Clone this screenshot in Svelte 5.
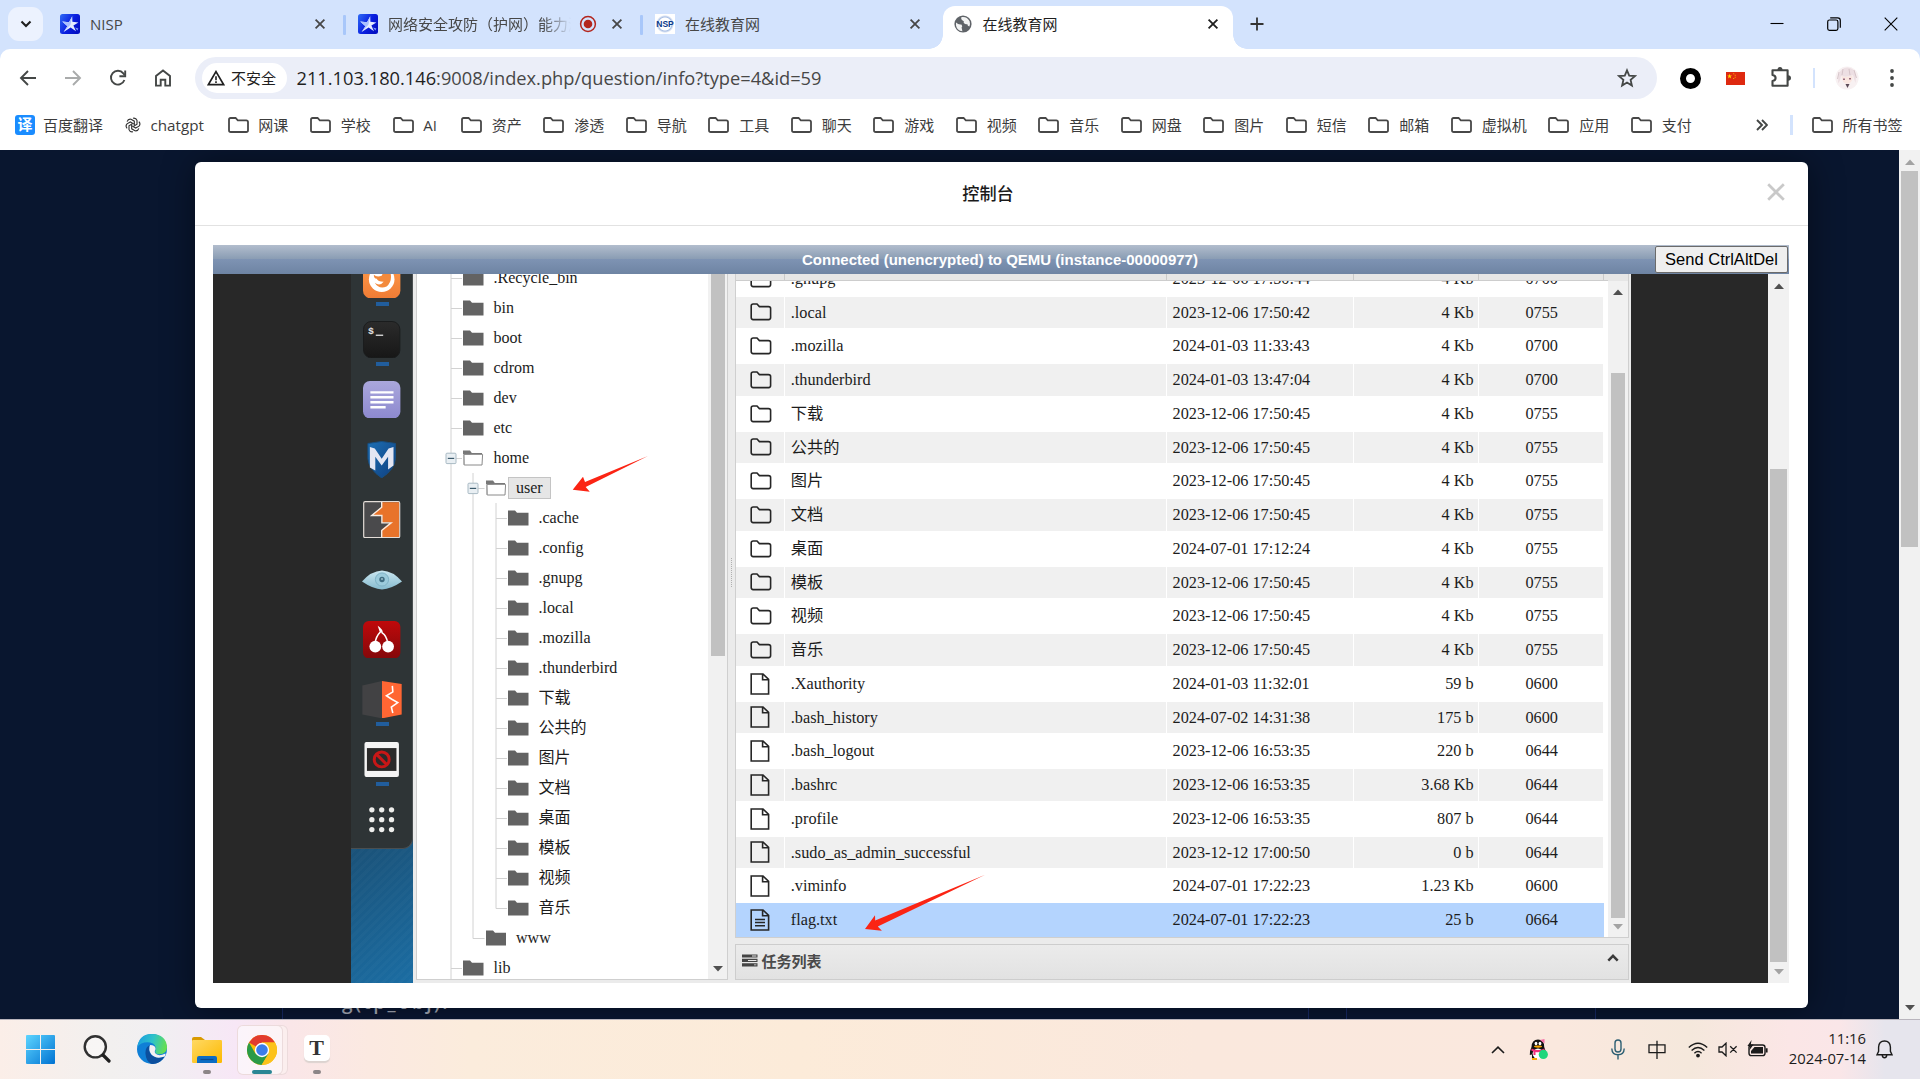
<script>
  const bookmarks = ['网课', '学校', 'AI', '资产', '渗透', '导航', '工具', '聊天', '游戏', '视频', '音乐', '网盘', '图片', '短信', '邮箱', '虚拟机', '应用', '支付'];

  // guides: v = vertical line, t = tee, m = tee with a minus box, l = corner
  const tree = [
    ['t', '.Recycle_bin'],
    ['t', 'bin'],
    ['t', 'boot'],
    ['t', 'cdrom'],
    ['t', 'dev'],
    ['t', 'etc'],
    ['m', 'home', 'open'],
    ['vm', 'user', 'open', true],
    ['vvt', '.cache'],
    ['vvt', '.config'],
    ['vvt', '.gnupg'],
    ['vvt', '.local'],
    ['vvt', '.mozilla'],
    ['vvt', '.thunderbird'],
    ['vvt', '下载'],
    ['vvt', '公共的'],
    ['vvt', '图片'],
    ['vvt', '文档'],
    ['vvt', '桌面'],
    ['vvt', '模板'],
    ['vvt', '视频'],
    ['vvl', '音乐'],
    ['vl', 'www'],
    ['t', 'lib'],
  ];

  const files = [
    ['dir', '.gnupg', '2023-12-06 17:50:44', '4 Kb', '0700'],
    ['dir', '.local', '2023-12-06 17:50:42', '4 Kb', '0755'],
    ['dir', '.mozilla', '2024-01-03 11:33:43', '4 Kb', '0700'],
    ['dir', '.thunderbird', '2024-01-03 13:47:04', '4 Kb', '0700'],
    ['dir', '下载', '2023-12-06 17:50:45', '4 Kb', '0755'],
    ['dir', '公共的', '2023-12-06 17:50:45', '4 Kb', '0755'],
    ['dir', '图片', '2023-12-06 17:50:45', '4 Kb', '0755'],
    ['dir', '文档', '2023-12-06 17:50:45', '4 Kb', '0755'],
    ['dir', '桌面', '2024-07-01 17:12:24', '4 Kb', '0755'],
    ['dir', '模板', '2023-12-06 17:50:45', '4 Kb', '0755'],
    ['dir', '视频', '2023-12-06 17:50:45', '4 Kb', '0755'],
    ['dir', '音乐', '2023-12-06 17:50:45', '4 Kb', '0755'],
    ['file', '.Xauthority', '2024-01-03 11:32:01', '59 b', '0600'],
    ['file', '.bash_history', '2024-07-02 14:31:38', '175 b', '0600'],
    ['file', '.bash_logout', '2023-12-06 16:53:35', '220 b', '0644'],
    ['file', '.bashrc', '2023-12-06 16:53:35', '3.68 Kb', '0644'],
    ['file', '.profile', '2023-12-06 16:53:35', '807 b', '0644'],
    ['file', '.sudo_as_admin_successful', '2023-12-12 17:00:50', '0 b', '0644'],
    ['file', '.viminfo', '2024-07-01 17:22:23', '1.23 Kb', '0600'],
    ['text', 'flag.txt', '2024-07-01 17:22:23', '25 b', '0664'],
  ];
</script>

{#snippet star()}
  <svg class="fav" viewBox="0 0 20 20">
    <defs><linearGradient id="sg" x1="0" y1="0" x2="1" y2="0.6"><stop offset="0" stop-color="#2f6bf5" /><stop offset="0.6" stop-color="#0a1fe0" /><stop offset="1" stop-color="#0410c4" /></linearGradient></defs>
    <rect width="20" height="20" rx="2.5" fill="url(#sg)" />
    <path d="M12.2 2.2 L12.4 7.8 L18.4 8.4 L13.4 11.4 L16 17.2 L10.6 13.6 L3.6 18 L7.4 12.2 L2.2 7.4 L9 8.2 Z" fill="#e6edff" />
    <path d="M12.2 2.2 L10.4 10.8 L3.6 18 L7.4 12.2 L2.2 7.4 L9 8.2 Z" fill="#a9c0ff" />
    <path d="M15 13.4 L18.4 14.6 L17.4 16.4 Z" fill="#7f9aff" />
  </svg>
{/snippet}

{#snippet cross()}
  <svg class="cross" viewBox="0 0 12 12"><path d="M1.6 1.6 L10.4 10.4 M10.4 1.6 L1.6 10.4" stroke="currentColor" stroke-width="1.8" fill="none" /></svg>
{/snippet}

{#snippet folder()}
  <svg class="bfolder" viewBox="0 0 21 16"><path d="M1 2.6 Q1 1 2.6 1 H7.6 L9.8 3.3 H18.2 Q20 3.3 20 5 V13.2 Q20 15 18.2 15 H2.8 Q1 15 1 13.2 Z" fill="none" stroke="#474747" stroke-width="1.8" /></svg>
{/snippet}

{#snippet arrow(dir, tone)}
  <svg class="sarrow" viewBox="0 0 10 6"><path d={dir === 'up' ? 'M0 6 L5 0.5 L10 6 Z' : 'M0 0 L5 5.5 L10 0 Z'} fill={tone} /></svg>
{/snippet}

{#snippet guide(kind)}
  <svg class="guide" viewBox="0 0 22.5 30">
    <path d={kind === 'v' ? 'M11 0 V30' : kind === 'l' ? 'M11 0 V15.5 H22.5' : 'M11 0 V30 M11 15.5 H22.5'} fill="none" stroke="#d2d2d2" stroke-width="1" />
    {#if kind === 'm'}
      <rect x="6" y="10.2" width="10" height="10.4" rx="1" fill="#e9eff3" stroke="#a9bac4" stroke-width="1" />
      <path d="M7.8 15.4 H14.2" stroke="#3c5a6c" stroke-width="1.2" />
    {/if}
  </svg>
{/snippet}

<div class="screen">
  <header class="tabs">
    <div class="search-tabs"><svg width="12" height="8" viewBox="0 0 12 8"><path d="M1.5 1.5 L6 6 L10.5 1.5" fill="none" stroke="#1f1f1f" stroke-width="2.1" /></svg></div>
    <div class="tab t1">{@render star()}<span class="label">NISP</span>{@render cross()}</div>
    <i class="tsep"></i>
    <div class="tab t2">
      {@render star()}<span class="label fade">网络安全攻防（护网）能力测</span>
      <svg class="rec" viewBox="0 0 18 18"><circle cx="9" cy="9" r="7.4" fill="none" stroke="#b3261e" stroke-width="1.5" /><circle cx="9" cy="9" r="4.3" fill="#b3261e" /></svg>
      {@render cross()}
    </div>
    <i class="tsep"></i>
    <div class="tab t3">
      <span class="nsp"><b>NSP</b></span>
      <span class="label">在线教育网</span>{@render cross()}
    </div>
    <div class="tab active">
      <svg class="globe" viewBox="0 0 18 18"><circle cx="9" cy="9" r="8.6" fill="#5f6368" /><path d="M2 7.5 Q4.5 10 7.4 9.4 Q9 11.2 7.6 12.6 L8.4 16.2 Q3 15.5 2 10.4 Z M7.5 2.1 Q13 1.2 15.6 6.2 Q16.6 9.4 15.4 11.6 Q13.5 11.4 13.2 9 Q10.8 9.8 9.6 7.6 Q10.6 6 8.6 5.4 Q6.6 4.6 7.5 2.1 Z" fill="#fff" opacity="0.92" /></svg>
      <span class="label">在线教育网</span>{@render cross()}
    </div>
    <svg class="plus" viewBox="0 0 14 14"><path d="M7 0.5 V13.5 M0.5 7 H13.5" stroke="#333" stroke-width="1.8" /></svg>
    <div class="win">
      <svg viewBox="0 0 14 14"><path d="M0.5 6.5 H13.5" stroke="#000" stroke-width="1.1" /></svg>
      <svg viewBox="0 0 14 14"><rect x="0.7" y="3" width="10.2" height="10.4" rx="1.8" fill="none" stroke="#000" stroke-width="1.2" /><path d="M3.2 0.8 H10.6 Q13.3 0.8 13.3 3.4 V10.8" fill="none" stroke="#000" stroke-width="1.2" /></svg>
      <svg viewBox="0 0 14 14"><path d="M0.7 0.7 L13.3 13.3 M13.3 0.7 L0.7 13.3" stroke="#000" stroke-width="1.1" /></svg>
    </div>
  </header>

  <section class="chrome">
    <div class="toolbar">
      <svg class="nav" viewBox="0 0 18 18"><path d="M17 9 H2 M9 2 L2 9 L9 16" fill="none" stroke="#444746" stroke-width="1.9" /></svg>
      <svg class="nav" viewBox="0 0 18 18"><path d="M1 9 H16 M9 2 L16 9 L9 16" fill="none" stroke="#a9abab" stroke-width="1.9" /></svg>
      <svg class="nav" viewBox="0 0 18 18"><path d="M15.4 11 A6.9 6.9 0 1 1 14.3 4.4 L15.6 6" fill="none" stroke="#444746" stroke-width="1.9" /><path d="M16.2 1.4 V7.2 H10.4" fill="none" stroke="#444746" stroke-width="1.9" /></svg>
      <svg class="nav" viewBox="0 0 18 18"><path d="M2 16.6 V7 L9 1.5 L16 7 V16.6 H11.3 V10.8 H6.7 V16.6 Z" fill="none" stroke="#444746" stroke-width="1.9" /></svg>
      <div class="omni">
        <div class="chip">
          <svg width="18" height="16" viewBox="0 0 18 16"><path d="M9 1.6 L16.6 14.6 H1.4 Z" fill="none" stroke="#1f1f1f" stroke-width="1.7" /><path d="M9 6.2 V10.2 M9 11.3 V13" stroke="#1f1f1f" stroke-width="1.6" /></svg>
          <span>不安全</span>
        </div>
        <span class="url"><b>211.103.180.146</b>:9008/index.php/question/info?type=4&amp;id=59</span>
        <svg class="fstar" viewBox="0 0 20 20"><path d="M10 2.3 L12.2 7.6 L18 8.1 L13.6 11.9 L14.9 17.5 L10 14.5 L5.1 17.5 L6.4 11.9 L2 8.1 L7.8 7.6 Z" fill="none" stroke="#444746" stroke-width="1.8" /></svg>
      </div>
      <i class="ring"></i>
      <svg class="flag" viewBox="0 0 19 13"><rect width="19" height="13" fill="#de2910" /><path d="M3.6 1.8 L4.2 3.5 H6 L4.6 4.6 L5.1 6.4 L3.6 5.3 L2.1 6.4 L2.6 4.6 L1.2 3.5 H3 Z" fill="#ffde00" /><path d="M7.2 1.2h1v1h-1z M8.7 2.8h1v1h-1z M8.7 4.7h1v1h-1z M7.2 6.1h1v1h-1z" fill="#ffb000" /></svg>
      <svg class="puzzle" viewBox="0 0 22 22"><path d="M2.5 4.3 H17.6 V19.8 H2.5 V15 Q5.6 14.6 5.6 12 Q5.6 9.4 2.5 9 Z" fill="none" stroke="#444746" stroke-width="2.1" stroke-linejoin="round" /><path d="M7.4 4 Q7.6 0.9 10 0.9 Q12.4 0.9 12.6 4 Z M18 9.2 Q21 9.4 21 12 Q21 14.6 18 14.8 Z" fill="#444746" /></svg>
      <i class="tbsep"></i>
      <svg class="avatar" viewBox="0 0 24 24"><circle cx="12" cy="12" r="11.6" fill="#f8f1f2" /><path d="M3.5 9 Q6 1.5 12.5 1.5 Q20 2 21 9.5 L20.5 17 Q19 13 18 9 Q12 12 6 10 Q5 16 3 17 Z" fill="#eddfe3" /><path d="M6.5 10 Q12 12 17.5 9.5 Q18 17 12.5 18 Q7 17.5 6.5 10 Z" fill="#fae6e0" /><path d="M8 12.5 h2 v1.6 h-2 z M14 12 h2 v1.6 h-2 z" fill="#9a6f80" /><path d="M10.5 18 L12.5 22 L14.5 18 Z" fill="#5a4a56" /><path d="M4 6 L2.5 13 M19 4 L21.5 12 M8 3 L7 9 M14 3 L15 9" stroke="#cfbcc2" stroke-width="0.8" /></svg>
      <svg class="dots" viewBox="0 0 4 18"><circle cx="2" cy="2" r="1.9" fill="#444746" /><circle cx="2" cy="9" r="1.9" fill="#444746" /><circle cx="2" cy="16" r="1.9" fill="#444746" /></svg>
    </div>
    <nav class="marks">
      <span class="yi">译</span><span class="bm baidu">百度翻译</span>
      <svg class="gpt" viewBox="0 0 16 16"><g fill="none" stroke="#333" stroke-width="1.15">{#each [0, 60, 120, 180, 240, 300] as a}<path d="M8 1.2 Q11 0.6 12 3.4 L12 7.2 L8.6 9.2" transform={`rotate(${a} 8 8)`} />{/each}</g></svg>
      <span class="bm gptlabel">chatgpt</span>
      {#each bookmarks as b}
        <span class="mark">{@render folder()}<span class="bm">{b}</span></span>
      {/each}
      <svg class="more" viewBox="0 0 12 12"><path d="M1 1 L6 6 L1 11 M6 1 L11 6 L6 11" fill="none" stroke="#444746" stroke-width="1.9" /></svg>
      <i class="bmsep"></i>
      <span class="mark all">{@render folder()}<span class="bm">所有书签</span></span>
    </nav>
  </section>

  <main class="page">
    <div class="stage">
      <div class="modal">
        <div class="mhead">
          <span class="mtitle">控制台</span>
          <svg class="mclose" viewBox="0 0 18 18"><path d="M1.2 1.2 L16.8 16.8 M16.8 1.2 L1.2 16.8" stroke="#c9c9c9" stroke-width="2.7" /></svg>
        </div>
        <div class="console">
          <div class="cbar"><span>Connected (unencrypted) to QEMU (instance-00000977)</span><button>Send CtrlAltDel</button></div>
          <div class="vm">
            <div class="dark left"></div>
            <div class="deskcol">
              <div class="dock">
                <div class="slot"><svg viewBox="0 0 38 38"><defs><linearGradient id="og" x1="0" y1="0" x2="0" y2="1"><stop offset="0" stop-color="#ff9d4d" /><stop offset="1" stop-color="#f07c35" /></linearGradient></defs><rect width="38" height="38" rx="8" fill="url(#og)" /><circle cx="19" cy="18.5" r="13" fill="#fff" /><path d="M11 14 Q14 17 19 15 Q21 10 27 9 Q31 20 24 26 Q16 29 12 22 Q17 26 21 21 Q15 21 14 18 Q11 18 11 14 Z" fill="#f38a3c" /></svg><i></i></div>
                <div class="slot"><svg viewBox="0 0 38 38"><defs><linearGradient id="tg" x1="0" y1="0" x2="0" y2="1"><stop offset="0" stop-color="#2b2b2b" /><stop offset="1" stop-color="#171717" /></linearGradient></defs><rect x="0.5" y="0.5" width="37" height="37" rx="8" fill="url(#tg)" stroke="#1b1d1e" /><text x="5" y="13" class="term">$</text><path d="M13 14.5 H20.5" stroke="#d8d8d8" stroke-width="1.4" /></svg><i></i></div>
                <div class="slot"><svg viewBox="0 0 38 38"><defs><linearGradient id="pg" x1="0" y1="0" x2="0" y2="1"><stop offset="0" stop-color="#aaa7dc" /><stop offset="1" stop-color="#8d89cf" /></linearGradient></defs><rect width="38" height="38" rx="7" fill="url(#pg)" /><path d="M7.5 11.5 H31 M7.5 16.5 H31 M7.5 21.6 H31 M7.5 26.7 H23" stroke="#fff" stroke-width="2.4" /></svg></div>
                <div class="slot"><svg viewBox="0 0 38 38"><defs><linearGradient id="mg" x1="0" y1="0" x2="1" y2="1"><stop offset="0" stop-color="#1d6fb4" /><stop offset="1" stop-color="#0f3f80" /></linearGradient></defs><path d="M5 2.5 Q12 1.5 19 0.5 Q26 1.5 33 2.5 L33 18 Q32 29 19 37.5 Q6 29 5 18 Z" fill="url(#mg)" stroke="#174f82" /><path d="M7 27 L7 6 L12 7.5 L19 18 L26 7.5 L31 6 V25 L25.5 29 V16 L19 25 L12.5 16 V30 Z" fill="#e4e6f3" /></svg></div>
                <div class="slot"><svg viewBox="0 0 38 38"><rect x="0.7" y="0.7" width="36.6" height="36.6" rx="1.5" fill="#4a4a4c" stroke="#e4ddd8" stroke-width="1.2" /><path d="M19 1.3 H36.7 V36.7 H19 V29 L28 21.5 L19.4 22 V14.4 L8.8 14.6 L19 6 Z" fill="#e8732a" /><path d="M19 1 V6.4 L8.8 14.8 H19.2 V22.2 H28.6 L19 30 V37" fill="none" stroke="#f5ece4" stroke-width="1.4" /></svg></div>
                <div class="slot"><svg class="eye" viewBox="0 0 40 20"><defs><linearGradient id="eg" x1="0" y1="0" x2="0" y2="1"><stop offset="0" stop-color="#cbe7f1" /><stop offset="1" stop-color="#86bbcf" /></linearGradient></defs><path d="M0 11.5 Q9 1 20 0.5 Q31 1 40 11.5 Q29 19 20 19.5 Q11 19 0 11.5 Z" fill="url(#eg)" /><circle cx="20" cy="9.5" r="6.6" fill="#9ccbdc" stroke="#7fb3c7" /><circle cx="20" cy="9.5" r="2.7" fill="#3f6d82" /><circle cx="20" cy="9" r="1" fill="#9bbdca" /></svg></div>
                <div class="slot"><svg viewBox="0 0 38 38"><defs><linearGradient id="rg" x1="0" y1="0" x2="0" y2="1"><stop offset="0" stop-color="#c0090b" /><stop offset="1" stop-color="#84080a" /></linearGradient></defs><rect width="38" height="38" rx="6" fill="url(#rg)" /><path d="M12.5 22 Q13 16 17.8 11 L16.5 7 Q19 9 19.5 12 Q24 15 25 22" fill="none" stroke="#fff" stroke-width="1.6" /><circle cx="12.5" cy="26" r="6" fill="#fff" /><circle cx="25.5" cy="26" r="6" fill="#fff" /></svg></div>
                <div class="slot"><svg class="wide" viewBox="0 0 40 38"><path d="M0 4.5 L20 0 V38 L0 34 Z" fill="#424244" /><path d="M20 0 L40 3 V34 L20 38 Z" fill="#ff6633" /><path d="M30.5 5 L31 11 L24.5 15 L30 18.5 L36 22 L29.5 26.5 L31 32.5" fill="none" stroke="#fff" stroke-width="1.6" /></svg><i></i></div>
                <div class="slot"><svg viewBox="0 0 38 38"><rect x="1.5" y="1" width="35" height="35.5" rx="2" fill="#f4f4f4" /><rect x="4" y="7.2" width="30" height="23.2" fill="#2a2a2a" /><circle cx="19" cy="18.7" r="7.6" fill="none" stroke="#c71717" stroke-width="3" /><path d="M13.8 13.6 L24.2 24" stroke="#c71717" stroke-width="3" /></svg><i></i></div>
                <div class="slot"><svg viewBox="0 0 38 38"><g fill="#eeeeec">{#each [9, 19, 29] as y}{#each [9, 19, 29] as x}<circle cx={x} cy={y} r="2.7" />{/each}{/each}</g></svg></div>
              </div>
            </div>
            <div class="app">
              <div class="treepane">
                <div class="tree">
                  {#each tree as [guides, name, state, selected]}
                    <div class="trow">
                      {#each guides.split('') as g}{@render guide(g)}{/each}
                      <svg class="tfold" viewBox="0 0 20.5 16">
                        {#if state === 'open'}
                          <path d="M0.6 15 V1.2 H6.6 L8.2 3.6" fill="#777" /><path d="M0 0.5 H7 L8.8 3 H19 V4 H0 Z" fill="#777" /><path d="M1 4.4 H19.6 L19 15 H1.2 Z" fill="#fff" stroke="#8a8a8a" stroke-width="1" />
                        {:else}
                          <path d="M0 0.4 H7 L9 2.8 H20.5 V15.6 H0 Z" fill="#636363" />
                        {/if}
                      </svg>
                      <span class={{ tname: true, sel: selected }}>{name}</span>
                    </div>
                  {/each}
                </div>
                <div class="tscroll"><b></b>{@render arrow('down', '#505050')}</div>
              </div>
              <div class="split"><i></i></div>
              <div class="right">
                <div class="gridpane">
                  <div class="gmain">
                    <div class="ghead"><i></i><i></i><i></i><i></i><i></i></div>
                    <div class="gclip">
                      {#each files as [kind, name, date, size, perm], i}
                        <div class={{ grow: true, odd: i % 2 === 1, picked: kind === 'text' }}>
                          <span class="c0">
                            {#if kind === 'dir'}
                              <svg width="22" height="18" viewBox="0 0 22 18"><path d="M1.2 3 Q1.2 1 3.2 1 H7 L9.4 3.6 H18.4 Q20.6 3.6 20.6 5.6 V14.6 Q20.6 16.6 18.6 16.6 H3.2 Q1.2 16.6 1.2 14.6 Z" fill="none" stroke="#262626" stroke-width="1.6" /></svg>
                            {:else}
                              <svg width="20" height="22" viewBox="0 0 20 22"><path d="M1.2 1 H13 L18.6 6.4 V21 H1.2 Z M12.6 1 V6.8 H18.6" fill="none" stroke="#262626" stroke-width="1.6" />{#if kind === 'text'}<path d="M5 10.4 H15 M5 13.6 H15 M5 16.8 H15" stroke="#262626" stroke-width="1.5" />{/if}</svg>
                            {/if}
                          </span>
                          <span class="c1">{name}</span>
                          <span class="c2">{date}</span>
                          <span class="c3">{size}</span>
                          <span class="c4">{perm}</span>
                        </div>
                      {/each}
                    </div>
                  </div>
                  <div class="gscroll"><em></em>{@render arrow('up', '#505050')}<b></b>{@render arrow('down', '#a3a3a3')}</div>
                </div>
                <div class="tasks">
                  <svg width="16" height="13" viewBox="0 0 16 13"><path d="M0 0.5 H15.5 V3.6 H0 Z M0 4.8 H15.5 V8 H0 Z M0 9.2 H15.5 V12.4 H0 Z" fill="#444" /><path d="M10 1.6 H14.4 V2.5 H10 Z M6 6 H14.4 V6.9 H6 Z M12 10.4 H14.4 V11.3 H12 Z" fill="#e6e6e6" /></svg>
                  <span>任务列表</span>
                  <svg class="up" width="12" height="8" viewBox="0 0 12 8"><path d="M1.3 6.6 L6 1.8 L10.7 6.6" fill="none" stroke="#3a3a3a" stroke-width="2.5" /></svg>
                </div>
              </div>
            </div>
            <div class="dark rest"></div>
            <div class="oscroll">{@render arrow('up', '#505050')}<b></b>{@render arrow('down', '#a3a3a3')}</div>
          </div>
        </div>
      </div>
      <div class="behind">
        <div class="panel wide-panel"><span>g(tp_obj).</span></div>
        <div class="panel side-panel"></div>
      </div>
    </div>
    <div class="pscroll">{@render arrow('up', '#a3a3a3')}<b></b>{@render arrow('down', '#505050')}</div>
  </main>

  <footer class="taskbar">
    <svg class="tb w29" viewBox="0 0 29 29"><defs><linearGradient id="wg" x1="0" y1="0" x2="1" y2="1"><stop offset="0" stop-color="#5dd5ff" /><stop offset="1" stop-color="#0072d2" /></linearGradient></defs><path d="M0 1 Q0 0 1 0 H14 V14 H0 Z M15 0 H28 Q29 0 29 1 V14 H15 Z M0 15 H14 V29 H1 Q0 29 0 28 Z M15 15 H29 V28 Q29 29 28 29 H15 Z" fill="url(#wg)" /></svg>
    <svg class="tb w28" viewBox="0 0 28 28"><circle cx="12.3" cy="11.8" r="10.6" fill="#ffffff66" stroke="#303030" stroke-width="2.4" /><path d="M20 20 L26 26" stroke="#1f1f1f" stroke-width="3.2" stroke-linecap="round" /></svg>
    <svg class="tb w30" viewBox="0 0 30 30">
      <defs><linearGradient id="e1" x1="0" y1="0.3" x2="1" y2="0.5"><stop offset="0" stop-color="#1a9fe0" /><stop offset="0.5" stop-color="#2fc3c8" /><stop offset="1" stop-color="#66e04e" /></linearGradient></defs>
      <circle cx="15" cy="15" r="15" fill="#0f7fd6" />
      <path d="M0.4 13 Q2 0 15 0 Q29 0.5 30 13 Q30 20 22.5 20.2 Q17 20 18.5 16.5 Q20 10 13 8.4 Q4 7.5 0.4 13 Z" fill="url(#e1)" />
      <path d="M8.5 20 Q8 13 13 11 Q10.5 17.5 15 21.5 Q20 25 27.8 22.5 Q22 31 14 29.8 Q9 27 8.5 20 Z" fill="#0c4f9e" />
      <path d="M13 11 Q18.5 11 18.6 15 Q17 17.5 18 19 Q21 23 28.4 19.6 Q28.8 20.8 27.8 22.5 Q19 25.5 14.4 20.5 Q11 16 13 11 Z" fill="#f4f0f3" />
    </svg>
    <div class="tbox">
      <svg class="tb w30" viewBox="0 0 30 28"><defs><linearGradient id="fg" x1="0" y1="0" x2="1" y2="1"><stop offset="0" stop-color="#ffd964" /><stop offset="1" stop-color="#fcb900" /></linearGradient></defs><path d="M0 3 Q0 1 2 1 H9 L13 4 V7 H0 Z" fill="#d99a00" /><rect y="4" width="30" height="23" rx="1.2" fill="url(#fg)" /><path d="M5 27 V22 Q5 20 7 20 H23 Q25 20 25 22 V27 Z" fill="#0c6cc4" /><path d="M8.5 23.5 H21.5" stroke="#0a4a90" stroke-width="1.2" /></svg>
      <i></i>
    </div>
    <div class="tbox cur">
      <svg class="tb w30" viewBox="0 0 30 30"><circle cx="15" cy="15" r="15" fill="#fbbc05" /><path d="M15 15 L2 7.5 A15 15 0 0 1 28 7.5 H15 Z" fill="#e23b2e" /><path d="M2 7.5 A15 15 0 0 0 14.6 30 L21.5 18.8 L15 15 L8.5 18.7 Z" fill="#2a9a48" /><path d="M28 7.5 H15 L21.5 18.8 L14.6 30 A15 15 0 0 0 28 7.5" fill="#fcc21b" /><circle cx="15" cy="15" r="7.2" fill="#fff" /><circle cx="15" cy="15" r="5.8" fill="#3b7de9" /></svg>
      <i></i>
    </div>
    <div class="tbox typora"><span>T</span><i></i></div>

    <div class="tray">
      <svg width="14" height="8" viewBox="0 0 14 8"><path d="M1 7 L7 1.2 L13 7" fill="none" stroke="#1b1b1b" stroke-width="1.6" /></svg>
      <svg class="qq" width="19" height="21" viewBox="0 0 19 21"><path d="M2.5 8 Q2.8 0.5 9 0.5 Q15.2 0.5 15.2 8 L17 13 L15 15 V19 H3 V15.5 L0.8 16 Q0.5 12 2.5 8 Z" fill="#111" /><ellipse cx="9" cy="14.6" rx="5.4" ry="5.2" fill="#fff" /><ellipse cx="7" cy="4.6" rx="1.4" ry="1.8" fill="#fff" /><ellipse cx="11" cy="4.6" rx="1.4" ry="1.8" fill="#fff" /><ellipse cx="9" cy="7.6" rx="4" ry="1.1" fill="#f7a600" /><path d="M2.6 9.5 Q9 12.5 15.4 9.5 L15.8 12 Q9 14 6.5 13 V16 H4.5 V12.4 L2.2 11.4 Z" fill="#f0307a" /><path d="M11 1 L15.5 0 V4.6 Z" fill="#f56fa6" /><path d="M3 19 H8 V21 H3 Z" fill="#f7a600" /><circle cx="14.3" cy="15.4" r="4.6" fill="#1fd67c" /></svg>
      <svg class="mic" width="14" height="21" viewBox="0 0 14 21"><rect x="4" y="1" width="6" height="12" rx="3" fill="none" stroke="#2d5f73" stroke-width="1.4" /><path d="M0.8 9.5 Q1 15.8 7 15.8 Q13 15.8 13.2 9.5 M7 16 V20.5" fill="none" stroke="#2d5f73" stroke-width="1.4" /></svg>
      <svg class="zh" width="18" height="20" viewBox="0 0 18 20"><path d="M1 4.8 H17 V12.6 H1 Z M9 0.8 V19" fill="none" stroke="#1b1b1b" stroke-width="1.3" /></svg>
      <svg class="wifi" width="20" height="16" viewBox="0 0 20 16"><path d="M0.8 5.6 Q10 -3 19.2 5.6 M3.6 8.4 Q10 2.4 16.4 8.4 M6.4 11.2 Q10 7.8 13.6 11.2" fill="none" stroke="#1b1b1b" stroke-width="1.4" /><circle cx="10" cy="13.6" r="1.9" fill="#1b1b1b" /></svg>
      <svg class="vol" width="20" height="15" viewBox="0 0 20 15"><path d="M1 5 H4 L8 1.2 V13.8 L4 10 H1 Z M12.2 4.2 L18.6 10.6 M18.6 4.2 L12.2 10.6" fill="none" stroke="#1b1b1b" stroke-width="1.3" /></svg>
      <svg class="bat" width="21" height="17" viewBox="0 0 21 17"><rect x="2" y="5" width="16" height="10.6" rx="2.4" fill="none" stroke="#1b1b1b" stroke-width="1.4" /><path d="M7.5 7 H16 V13.6 H4 V11 Z" fill="#1b1b1b" /><path d="M18.8 8.2 H20.6 V12.4 H18.8 Z M4.6 0 L0.4 6 H3.2 L2.2 10.4 L6.6 4.4 H3.8 Z" fill="#1b1b1b" /></svg>
      <div class="clock"><span>11:16</span><span>2024-07-14</span></div>
      <svg class="bell" width="17" height="19" viewBox="0 0 17 19"><path d="M1 14.8 L2.6 11.4 V7 Q3 1 8.5 1 Q14 1 14.4 7 V11.4 L16 14.8 Z M6.2 15.2 Q6.6 17.8 8.5 17.8 Q10.4 17.8 10.8 15.2" fill="none" stroke="#1b1b1b" stroke-width="1.4" /></svg>
    </div>
  </footer>

  <!-- hand-drawn pointers laid over the console -->
  <svg class="pointers" viewBox="0 0 1920 1079">
    <path d="M572.7 489.7 L583 476.7 L585 482 L648 456 L585.7 487 L589.8 491.7 Z" fill="#fb2414" />
    <path d="M865 929 L875 915.3 L875.2 920.6 L985.2 874.7 L877.8 926.6 L881.9 930.7 Z" fill="#fb2414" />
  </svg>
</div>

<style>
  :global(body) { margin: 0; overflow: hidden; }
  svg { display: block; flex: none; }
  i, em { font-style: normal; flex: none; }
  .screen { position: relative; width: 1920px; height: 1079px; display: flex; flex-direction: column; overflow: hidden; background: #d3e3fd; font-family: "Open Sans", "Noto Sans CJK SC", sans-serif; }

  .tabs { height: 49px; flex: none; display: flex; align-items: center; color: #474747; background: #d3e3fd; }
  .search-tabs { width: 35px; height: 34px; margin: 0 0 1px 8px; border-radius: 11px; background: #ecf2fe; display: flex; align-items: center; justify-content: center; }
  .tab { display: flex; align-items: center; height: 43px; box-sizing: border-box; padding-bottom: 1px; }
  .t1 { width: 283px; margin-left: 17px; }
  .t2 { width: 282px; margin-left: 12px; }
  .t3 { width: 277px; margin-left: 12px; }
  .fav { width: 20px; height: 20px; }
  .label { font-size: 15px; margin-left: 10px; white-space: nowrap; flex: 1; line-height: 24px; }
  .fade { flex: none; width: 184px; margin-right: 7px; mask-image: linear-gradient(90deg, #000 155px, transparent 183px); }
  .t1 .cross { margin-right: 17px; }
  .t2 .cross { margin-left: 14px; }
  .t3 .cross { margin-right: 11px; }
  .cross { width: 12px; height: 12px; }
  .rec { width: 18px; height: 18px; margin-left: 0; }
  .tsep { width: 3px; height: 20px; background: #a8c7fa; border-radius: 1px; }
  .nsp { width: 20px; height: 20px; background: radial-gradient(circle, #fff 6px, #a9bfe4 7px, #fff 9px); display: flex; align-items: center; justify-content: center; }
  .nsp b { font: 900 8.5px "Liberation Sans", sans-serif; color: #0b3a8c; }
  .active { position: relative; width: 290px; margin: 6px 0 0 11px; padding: 0 14px 7px 11px; background: #fff; border-radius: 12px 12px 0 0; color: #1f1f1f; }
  .active .label { margin-left: 10.5px; }
  .active::before, .active::after { content: ""; position: absolute; bottom: 0; width: 14px; height: 14px; }
  .active::before { left: -14px; background: radial-gradient(circle at 0 0, transparent 13.5px, #fff 14px); }
  .active::after { right: -14px; background: radial-gradient(circle at 100% 0, transparent 13.5px, #fff 14px); }
  .globe { width: 18px; height: 18px; }
  .plus { width: 14px; height: 14px; margin-left: 17px; margin-bottom: 1px; }
  .win { margin-left: auto; margin-right: 22px; margin-bottom: 1px; display: flex; gap: 43px; }
  .win svg { width: 14px; height: 14px; }

  .chrome { flex: none; height: 101px; background: #fff; border-radius: 10px 10px 0 0; }
  .toolbar { height: 58px; display: flex; align-items: center; padding-left: 19px; }
  .nav { width: 18px; height: 18px; margin-right: 27px; }
  .omni { width: 1462px; height: 42px; margin-left: -4px; border-radius: 21px; background: #ebeef8; display: flex; align-items: center; }
  .chip { width: 85px; height: 30px; margin-left: 7px; border-radius: 15px; background: #fff; display: flex; align-items: center; gap: 6px; padding-left: 5px; box-sizing: border-box; color: #1f1f1f; }
  .chip span { font-size: 15px; line-height: 24px; white-space: nowrap; }
  .url { margin-left: 9.5px; flex: 1; font-size: 18.25px; line-height: 30px; color: #474747; white-space: nowrap; }
  .url b { font-weight: 400; color: #1f1f1f; }
  .fstar { width: 20px; height: 20px; margin-right: 20px; }
  .ring { width: 9px; height: 9px; border: 6px solid #000; border-radius: 50%; margin-left: 23px; }
  .flag { width: 19px; height: 13px; margin-left: 25px; }
  .puzzle { width: 22px; height: 22px; margin-left: 25px; margin-bottom: 3px; }
  .tbsep { width: 2px; height: 20px; background: #d3e3fd; margin-left: 21px; }
  .avatar { width: 24px; height: 24px; margin-left: 20px; }
  .dots { width: 4px; height: 18px; margin-left: 31px; }

  .marks { height: 36px; display: flex; align-items: center; padding-left: 15px; }
  .yi { width: 20px; height: 20px; line-height: 19px; text-align: center; border-radius: 3px; background: #1a8cff; color: #fff; font-size: 15px; font-weight: 700; }
  .bm { font-size: 15px; line-height: 22px; color: #3c3c3c; white-space: nowrap; min-width: 16px; }
  .baidu { margin-left: 8px; width: 60px; }
  .gpt { width: 16px; height: 16px; margin-left: 22px; }
  .gptlabel { width: 77px; margin-left: 9.5px; font-size: 15.2px; }
  .mark { display: flex; align-items: center; margin-right: 21.8px; }
  .mark .bm { margin-left: 9.7px; }
  .bfolder { width: 21px; height: 16px; }
  .more { width: 12px; height: 12px; margin-left: auto; margin-right: 22px; margin-bottom: 1px; }
  .bmsep { width: 3px; height: 20px; background: #d3e3fd; margin-right: 19px; }
  .mark.all { margin-right: 17.5px; }

  .page { flex: none; height: 869px; display: flex; background: #09162f; }
  .stage { width: 1899px; display: flex; flex-direction: column; align-items: flex-start; overflow: hidden; }
  .modal { flex: none; width: 1613px; height: 846px; margin: 12px 0 0 195px; background: #fff; border-radius: 6px; box-shadow: 1px 1px 34px rgba(0, 0, 0, 0.45); z-index: 1; }
  .mhead { height: 63px; border-bottom: 1px solid #e2e2e2; display: flex; align-items: center; padding-right: 23px; }
  .mtitle { flex: 1; padding-left: 14px; margin-bottom: 2px; text-align: center; font-size: 17.2px; color: #1a1a1a; font-weight: 500; font-family: "Noto Sans CJK SC", sans-serif; }
  .mclose { width: 18px; height: 18px; margin-bottom: 3px; }
  .console { width: 1576px; margin: 19px 0 0 18px; }
  .cbar { height: 29px; display: flex; align-items: center; background: linear-gradient(180deg, #b2bdcd 0, #899cb3 49%, #7e93b3 49%, #6e84a3 100%); }
  .cbar span { flex: 1; text-align: center; padding-left: 132px; font: 700 15px "Liberation Sans", sans-serif; color: #fff; white-space: nowrap; }
  .cbar button { width: 133px; height: 27px; margin-right: 1px; padding: 0; border: 1px solid #6b6b6b; border-radius: 2px; background: #efefef; font: 16.5px "Liberation Sans", sans-serif; color: #000; white-space: nowrap; }
  .vm { height: 709px; display: flex; overflow: hidden; }
  .dark { background: #282828; }
  .left { width: 138px; }
  .rest { width: 137px; }
  .deskcol { width: 62px; overflow: hidden; background: repeating-linear-gradient(135deg, rgba(255, 255, 255, 0.02) 0 3px, transparent 3px 6px), linear-gradient(150deg, #1a4f74 75%, #1b6da3 100%); }
  .dock { margin-top: -24px; height: 599px; background: #2e3436; border: solid #4a4f51; border-width: 0 1px 1px 0; border-radius: 0 0 10px 0; box-sizing: border-box; width: 62px; }
  .slot { height: 60px; display: flex; flex-direction: column; align-items: center; padding: 10.8px 0 0 1px; box-sizing: border-box; }
  .slot svg { width: 37.4px; height: 37.4px; }
  .slot .wide { width: 40px; }
  .slot .eye { width: 40px; height: 20px; margin-top: 9px; }
  .slot i { width: 13px; height: 4px; background: #215d9c; margin-top: 3.6px; }
  .term { font: 700 10px "Liberation Mono", monospace; fill: #e0e0e0; }

  .app { width: 1218px; display: flex; background: #ebebeb; padding: 0 0 3px 3px; box-sizing: border-box; font-family: "Liberation Serif", "Noto Sans CJK SC", serif; color: #1c1c1c; }
  .treepane { width: 312px; flex: none; box-sizing: border-box; background: #fff; border: solid #cfcfcf; border-width: 0 1px 1px 1px; display: flex; overflow: hidden; }
  .tree { width: 291px; margin-top: -11px; }
  .trow { height: 30px; display: flex; align-items: center; padding-left: 22.5px; }
  .guide { width: 22.5px; height: 30px; }
  .tfold { width: 20.5px; height: 16px; margin-left: 1px; }
  .tname { margin-left: 2px; padding: 0 7px; border: 1px solid transparent; height: 20px; line-height: 20px; font-size: 16.05px; white-space: nowrap; }
  .sel { background: #e6e6e6; border-color: #c4c4c4; }
  .tscroll { width: 19px; background: #f1f1f1; display: flex; flex-direction: column; align-items: center; }
  .tscroll b { width: 14px; height: 382px; background: #c1c1c1; margin-bottom: 310px; flex: none; }
  .sarrow { width: 10px; height: 6px; }
  .split { width: 7px; flex: none; display: flex; align-items: center; justify-content: center; }
  .split i { width: 0; height: 29px; border-left: 1px dotted #b0b0b0; margin-bottom: 110px; }
  .right { width: 894px; display: flex; flex-direction: column; }
  .gridpane { height: 664px; box-sizing: border-box; background: #fff; border: solid #cfcfcf; border-width: 0 1px 1px 1px; display: flex; }
  .gmain { width: 872px; display: flex; flex-direction: column; }
  .ghead { height: 7px; flex: none; display: flex; background: #e6e6e6; border-bottom: 1px solid #cdcdcd; box-sizing: border-box; }
  .ghead i { border-right: 1px solid #cacaca; box-sizing: border-box; }
  .ghead i:nth-child(1) { width: 49.4px; }
  .ghead i:nth-child(2) { width: 381.2px; }
  .ghead i:nth-child(3) { width: 187.6px; }
  .ghead i:nth-child(4) { width: 125px; }
  .ghead i:nth-child(5) { width: 125px; }
  .gclip { flex: 1; overflow: hidden; }
  .grow { height: 33.75px; width: 868.2px; display: flex; align-items: stretch; padding: 1.2px 0 1.2px; box-sizing: border-box; font-size: 16.25px; }
  .grow:first-child { margin-top: -19px; }
  .grow span { box-sizing: border-box; border-right: 1px solid #fff; white-space: nowrap; line-height: 31px; padding-top: 0.8px; }
  .odd span { background: #f0f0f0; }
  .picked, .picked span { background: #b4d4fe; border-color: #b4d4fe; }
  .grow .c0 { width: 49.4px; padding: 0 0 0.6px 13.5px; display: flex; align-items: center; }
  .c1 { width: 381.2px; padding-left: 5.4px; }
  .c2 { width: 187.6px; padding-left: 6px; }
  .c3 { width: 125px; text-align: right; padding-right: 4.5px; }
  .c4 { width: 125px; text-align: center; padding-left: 1px; }
  .gscroll { width: 20px; background: #f1f1f1; display: flex; flex-direction: column; align-items: center; }
  .gscroll em { width: 20px; height: 7px; background: #e6e6e6; margin-bottom: 8px; }
  .gscroll b { width: 14px; height: 545px; background: #c1c1c1; margin: 78px 0 6px; flex: none; }
  .tasks { flex: 1; margin-top: 6px; border: 1px solid #cdcdcd; background: linear-gradient(180deg, #ebebeb, #e2e2e2); display: flex; align-items: center; padding: 0 9px 3px 6px; }
  .tasks span { flex: 1; margin-left: 3.5px; font: 700 15px/20px "Noto Sans CJK SC", sans-serif; color: #4a4a4a; }
  .up { margin-bottom: 5px; }
  .oscroll { width: 21px; background: #f1f1f1; display: flex; flex-direction: column; align-items: center; padding-top: 9px; box-sizing: border-box; }
  .oscroll b { width: 17px; height: 493px; background: #c1c1c1; margin: 180px 0 7px; flex: none; }

  .behind { flex: none; width: 1314px; height: 11px; margin-left: 282px; display: flex; justify-content: space-between; }
  .panel { box-sizing: border-box; border: solid #172a66; border-width: 0 1px; background: #0a1733; overflow: hidden; }
  .wide-panel { width: 1027px; }
  .side-panel { width: 250px; }
  .panel span { display: block; margin: -18px 0 0 59px; font: 600 19px/24px "Open Sans", sans-serif; color: #aab0bd; letter-spacing: 2.4px; }
  .pscroll { width: 21px; background: #f1f1f1; display: flex; flex-direction: column; align-items: center; padding-top: 9px; box-sizing: border-box; }
  .pscroll b { width: 17px; height: 376px; background: #c1c1c1; margin: 6px 0 458px; flex: none; }

  .taskbar { height: 60px; flex: none; box-sizing: border-box; border-top: 1px solid #b9b5bd; display: flex; align-items: center; padding-left: 26px;
    background: linear-gradient(90deg, #fbeee8 0, #f2f0ef 110px, #f1eff2 160px, #f7e7f6 235px, #fae6e8 290px, #fbe9e1 370px, #fbecdc 470px, #fcebd9 800px, #fae8dd 1200px, #fae8de 1560px, #f5e8dc 1690px, #fbe6e6 1790px, #fae6e8 1840px, #e6e5ed 1885px, #e6e5ed 1920px); }
  .tb { margin-bottom: 1px; }
  .w29 { width: 29px; height: 29px; }
  .w28 { width: 28px; height: 28px; margin-left: 28px; }
  .w30 { width: 30px; height: 30px; }
  .taskbar > .w30 { margin-left: 26px; }
  .tbox { width: 48px; height: 48px; margin-left: 16px; box-sizing: border-box; display: flex; flex-direction: column; align-items: center; padding-top: 9px; border-radius: 5px; }
  .tbox i { width: 8px; height: 4px; border-radius: 2px; background: #8c8587; margin-top: 4px; }
  .cur { margin-left: 7px; width: 44px; background: rgba(255, 255, 255, 0.55); box-shadow: 0 0 0 1px #ecdbdc, 5px 0 0 0 #fbeeee, 5px 0 0 1px #ecdbdc; padding-left: 4px; }
  .cur i { width: 20px; background: #2a8594; }
  .typora { margin-left: 3.5px; width: 62px; padding-top: 9px; }
  .typora span { width: 26px; height: 26px; border-radius: 5px; background: #fff; box-shadow: 0 2px 1px #dcd3d0; font: 700 22px/26px "Liberation Serif", serif; text-align: center; color: #333; margin-bottom: 5px; }
  .tray { margin-left: auto; height: 58px; padding-right: 27px; display: flex; align-items: center; }
  .qq { margin-left: 24px; }
  .mic { margin-left: 63px; }
  .zh { margin-left: 23px; }
  .wifi { margin-left: 22px; }
  .vol { margin-left: 10px; }
  .bat { margin-left: 9px; margin-bottom: 2px; }
  .clock { width: 98px; margin-bottom: 4px; display: flex; flex-direction: column; align-items: flex-end; font-size: 14.8px; line-height: 20px; color: #1b1b1b; }
  .bell { margin-left: 10px; }
  .pointers { position: absolute; z-index: 5; left: 0; top: 0; width: 1920px; height: 1079px; pointer-events: none; }
</style>
